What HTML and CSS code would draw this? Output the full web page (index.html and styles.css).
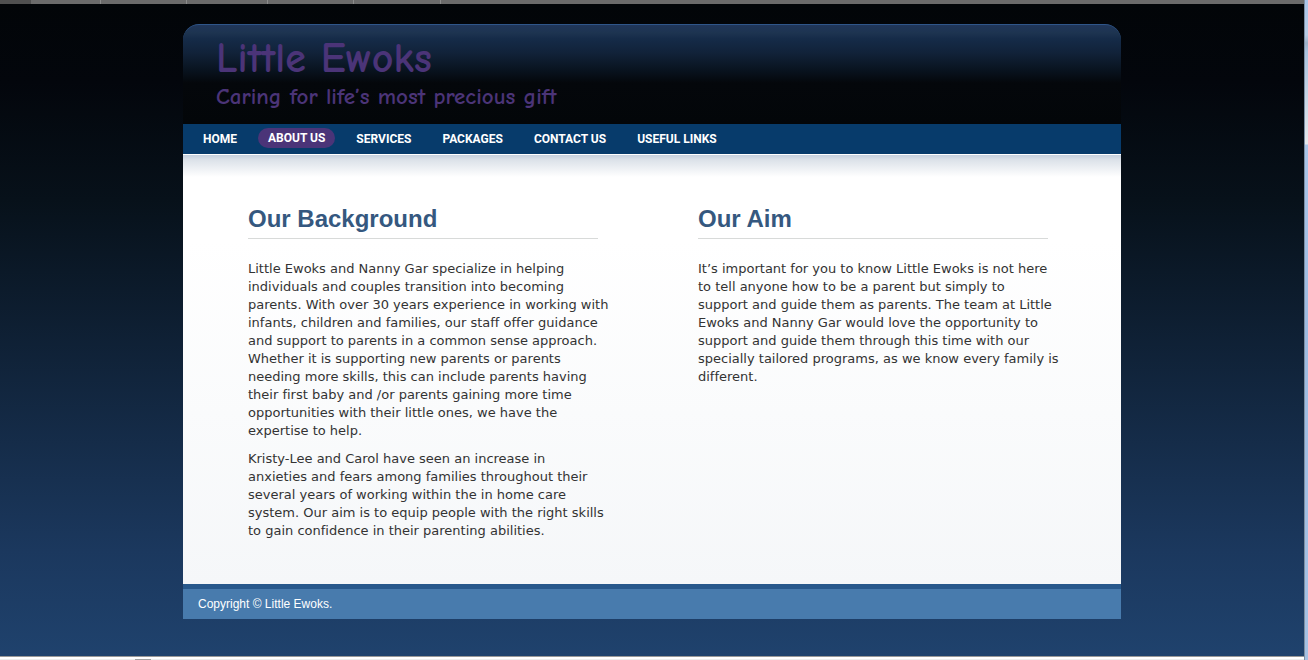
FILE: index.html
```html
<!DOCTYPE html>
<html lang="en">
<head>
<meta charset="utf-8">
<title>Little Ewoks - About Us</title>
<link rel="stylesheet" href="styles.css">
</head>
<body>
<div class="window">
  <div class="tabstrip" aria-hidden="true">
    <span class="tab tab-first"></span>
    <span class="tab tab-short"></span>
    <span class="tab"></span>
    <span class="tab tab-mid"></span>
    <span class="tab"></span>
    <span class="tab tab-long"></span>
  </div>
  <div class="viewport">
    <div class="page">
      <header class="banner">
        <h1 class="brand">Little Ewoks</h1>
        <p class="tagline">Caring for life’s most precious gift</p>
      </header>
      <nav class="menu">
        <a class="menu-link" href="#home">HOME</a>
        <a class="menu-link menu-current" href="#about" aria-current="page">ABOUT US</a>
        <a class="menu-link" href="#services">SERVICES</a>
        <a class="menu-link" href="#packages">PACKAGES</a>
        <a class="menu-link" href="#contact">CONTACT US</a>
        <a class="menu-link" href="#links">USEFUL LINKS</a>
      </nav>
      <main class="content">
        <section class="column">
          <h2 class="heading">Our Background</h2>
          <p class="text">Little Ewoks and Nanny Gar specialize in helping<br>individuals and couples transition into becoming<br>parents. With over 30 years experience in working with<br>infants, children and families, our staff offer guidance<br>and support to parents in a common sense approach.<br>Whether it is supporting new parents or parents<br>needing more skills, this can include parents having<br>their first baby and /or parents gaining more time<br>opportunities with their little ones, we have the<br>expertise to help.</p>
          <p class="text">Kristy-Lee and Carol have seen an increase in<br>anxieties and fears among families throughout their<br>several years of working within the in home care<br>system. Our aim is to equip people with the right skills<br>to gain confidence in their parenting abilities.</p>
        </section>
        <section class="column">
          <h2 class="heading">Our Aim</h2>
          <p class="text">It’s important for you to know Little Ewoks is not here<br>to tell anyone how to be a parent but simply to<br>support and guide them as parents. The team at Little<br>Ewoks and Nanny Gar would love the opportunity to<br>support and guide them through this time with our<br>specially tailored programs, as we know every family is<br>different.</p>
        </section>
      </main>
      <footer class="footer">Copyright © Little Ewoks.</footer>
    </div>
  </div>
  <div class="edge" aria-hidden="true"></div>
  <div class="statusbar" aria-hidden="true"><span class="status-mark"></span></div>
</div>
</body>
</html>
```
FILE: styles.css
```css
* {
  box-sizing: border-box;
}

body {
  margin: 0;
  font-family: "Liberation Sans", Arial, sans-serif;
  font-variant-ligatures: none;
}

.window {
  display: grid;
  grid-template-columns: 1fr 4px;
  grid-template-rows: 4px 1fr 4px;
  min-height: 100vh;
}

.tabstrip {
  display: flex;
  background: #6b6b6b;
}

.tab {
  width: 86px;
  border-right: 1px solid #8c8c8c;
}

.tab-first {
  width: 31px;
  border-right: 0;
  background: #505050;
}

.tab-short {
  width: 70px;
}

.tab-mid {
  width: 81px;
}

.tab-long {
  width: 87px;
}

.viewport {
  grid-row: 2;
  padding: 20px 0 36px;
  background: linear-gradient(#020508, #03060c 12%, #07111a 30%, #1b385e 84%, #1f426d);
}

.edge {
  grid-column: 2;
  grid-row: 1 / 4;
  border-left: 1px solid #7e8fa3;
  background: linear-gradient(#a9c5ea, #b8cde6 35px, #9eb2c9 43px, #a9c3df 52px, #e6e9ec 144px, #a9c5e8 145px, #9dbbe0 50%, #a5c2e4);
}

.statusbar {
  padding: 1px 0 0 135px;
  background: linear-gradient(#999 1px, #fff 1px, #fff 3px, #ededed 3px);
}

.status-mark {
  display: block;
  width: 16px;
  height: 1px;
  margin-top: 2px;
  background: #a0a0a0;
}

.page {
  max-width: 938px;
  margin: 0 auto;
}

.banner {
  height: 100px;
  padding: 10px 33px 0;
  border-top: 1px solid #2f568a;
  border-radius: 16px 16px 0 0;
  background: linear-gradient(#20365a, #1d3450 8px, #152b48 14px, #112239 28px, #0a1624 42px, #04070b 58px, #030609);
  color: #4b3478;
  font-family: "Comic Sans MS", "Comic Neue", Lato, sans-serif;
}

.brand {
  margin: 0;
  font-size: 42px;
  font-weight: bold;
  line-height: 48px;
}

.tagline {
  margin: 0;
  font-size: 23px;
  font-weight: bold;
  line-height: 28px;
}

.menu {
  display: flex;
  align-items: center;
  gap: 11px;
  height: 30px;
  padding: 0 10px;
  background: #073b6b;
}

.menu-link {
  padding: 0 10px;
  border-radius: 10px;
  color: #fff;
  font-family: Roboto, "Liberation Sans", sans-serif;
  font-size: 12px;
  font-weight: bold;
  line-height: 20px;
  text-decoration: none;
}

.menu-current {
  margin-bottom: 2px;
  background: #4b3478;
}

.content {
  display: grid;
  grid-template-columns: repeat(2, minmax(0, 1fr));
  gap: 100px;
  padding: 48px 73px 44px 65px;
  border-top: 1px solid #fff;
  background:
    linear-gradient(#c5cfdd, #dce2e9 5px, #fff0 22px) no-repeat,
    linear-gradient(#fff 20%, #f5f7f9);
}

.heading {
  margin: 0 0 21px;
  padding-bottom: 3px;
  border-bottom: 1px solid #d8dad9;
  color: #35587f;
  font-size: 24px;
  line-height: 32px;
}

.text {
  margin: 0 0 10px;
  color: #333;
  font-family: Verdana, "DejaVu Sans", sans-serif;
  font-size: 13px;
  line-height: 18px;
  white-space: nowrap;
}

.text:last-child {
  margin-bottom: 0;
}

.footer {
  padding: 5px 15px;
  border-top: 5px solid #28598c;
  background: #487bad;
  color: #fff;
  font-size: 12px;
  line-height: 20px;
}
```
